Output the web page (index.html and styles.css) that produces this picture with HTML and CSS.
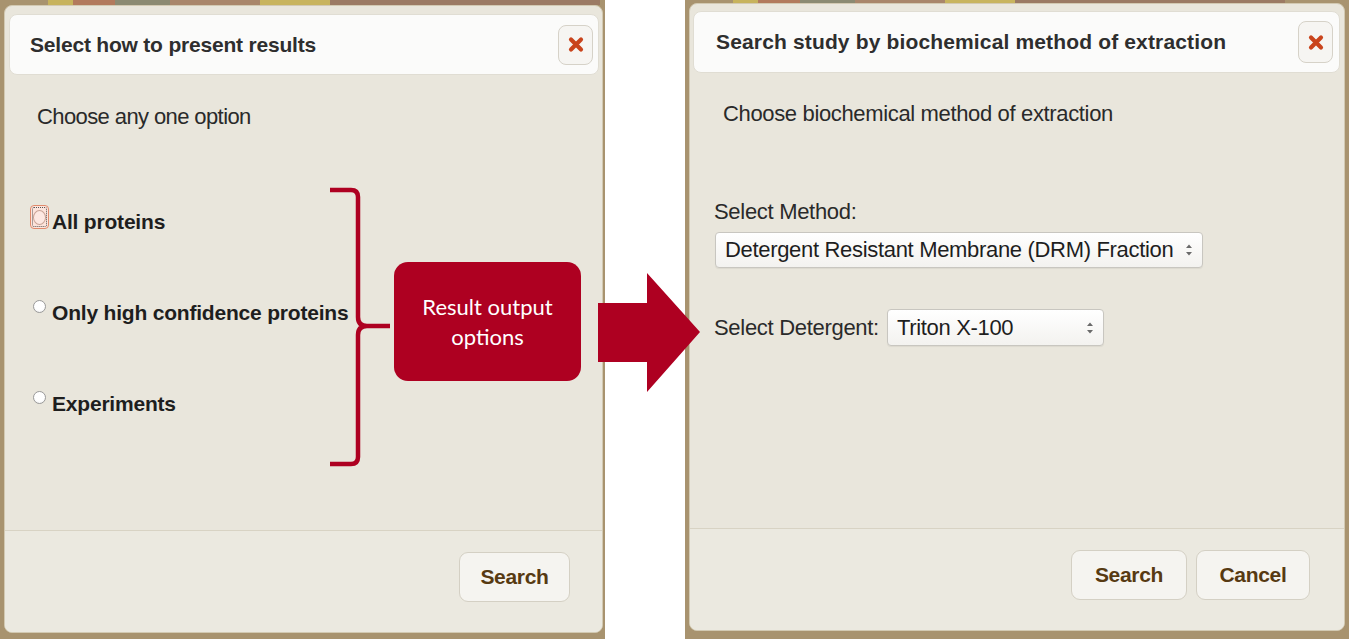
FILE: index.html
```html
<!DOCTYPE html>
<html>
<head>
<meta charset="utf-8">
<link rel="stylesheet" href="styles.css">
</head>
<body>
<div class="page">
  <div class="shot shot-left">
    <div class="dialog dialog-left">
      <div class="titlebar">
        <span class="title">Select how to present results</span>
        <button class="close" aria-label="close">
          <svg width="16" height="17" viewBox="0 0 16 17"><path d="M3 3.5 L13 13.5 M13 3.5 L3 13.5" stroke="#c9441c" stroke-width="4.2" stroke-linecap="round"/></svg>
        </button>
      </div>
      <div class="content content-left">
        <p class="lead">Choose any one option</p>
        <label class="option"><span class="radio radio-focus"><span class="radio-dot"></span></span><span class="opt-text">All proteins</span></label>
        <label class="option"><span class="radio"></span><span class="opt-text">Only high confidence proteins</span></label>
        <label class="option"><span class="radio"></span><span class="opt-text">Experiments</span></label>
      </div>
      <div class="buttonpane">
        <button class="btn btn-search-left">Search</button>
      </div>
    </div>
  </div>

  <div class="shot shot-right">
    <div class="dialog dialog-right">
      <div class="titlebar titlebar-right">
        <span class="title title-right">Search study by biochemical method of extraction</span>
        <button class="close close-right" aria-label="close">
          <svg width="16" height="17" viewBox="0 0 16 17"><path d="M3 3.5 L13 13.5 M13 3.5 L3 13.5" stroke="#c9441c" stroke-width="4.2" stroke-linecap="round"/></svg>
        </button>
      </div>
      <div class="content content-right">
        <p class="lead lead-right">Choose biochemical method of extraction</p>
        <div class="field-label">Select Method:</div>
        <div class="select select-method">
          <span class="select-text">Detergent Resistant Membrane (DRM) Fraction</span>
          <svg class="spin" width="8" height="14" viewBox="0 0 8 14"><path d="M1 5 L4 1.5 L7 5 Z M1 9 L4 12.5 L7 9 Z" fill="#6a6a6a"/></svg>
        </div>
        <div class="det-row">
          <span class="field-label inline">Select Detergent:</span>
          <div class="select select-det">
            <span class="select-text">Triton X-100</span>
            <svg class="spin" width="8" height="14" viewBox="0 0 8 14"><path d="M1 5 L4 1.5 L7 5 Z M1 9 L4 12.5 L7 9 Z" fill="#6a6a6a"/></svg>
          </div>
        </div>
      </div>
      <div class="buttonpane buttonpane-right">
        <button class="btn btn-search-right">Search</button>
        <button class="btn btn-cancel">Cancel</button>
      </div>
    </div>
  </div>

  <svg class="annot" width="1349" height="639" viewBox="0 0 1349 639">
    <path d="M330 190 L351 190 Q358 190 358 197 L358 317 Q358 326 367 326 L390 326 M367 326 Q358 326 358 335 L358 457 Q358 464 351 464 L330 464" fill="none" stroke="#ae0021" stroke-width="4.5"/>
    <polygon points="598,303 647,303 647,273 700,332 647,392 647,362 598,362" fill="#ae0021"/>
  </svg>
  <div class="callout">Result output<br>options</div>
</div>
</body>
</html>
```

FILE: styles.css
```css
* { box-sizing: border-box; }
html, body { margin: 0; padding: 0; background: #ffffff; }
body {
  font-family: "Liberation Sans", Arial, sans-serif;
  color: #2a2a2a;
}
.page {
  position: relative;
  width: 1349px;
  height: 639px;
  display: flex;
  overflow: hidden;
}
.shot {
  height: 639px;
  background:
    linear-gradient(90deg, #a8936f 0 48px, #c7b35d 48px 73px, #b27a5d 73px 115px, #8b8a72 115px 170px, #a9866b 170px 260px, #c8b45e 260px 330px, #9b7a64 330px 600px, #a8936f 600px) top / 100% 5px no-repeat,
    #a8936f;
}
.shot-left {
  width: 605px;
  padding: 5px 2px 6px 4px;
}
.shot-right {
  width: 664px;
  margin-left: 80px;
  padding: 3px 4px 8px 4px;
}
.dialog {
  height: 100%;
  display: flex;
  flex-direction: column;
  background: #e9e6dc;
  border: 1px solid #d2c9b2;
  border-radius: 8px;
  overflow: hidden;
}
.titlebar {
  margin: 8px 3px 0 4px;
  height: 61px;
  flex: none;
  display: flex;
  align-items: center;
  justify-content: space-between;
  background: #fbfbfa;
  border: 1px solid #e0ddd3;
  border-radius: 8px;
  padding-left: 20px;
  padding-right: 5px;
}
.titlebar-right {
  margin: 7px 4px 0 3px;
  height: 62px;
  padding-left: 22px;
  padding-right: 6px;
}
.title {
  font-weight: bold;
  font-size: 21px;
  letter-spacing: -0.2px;
  color: #2e2e2e;
}
.title-right {
  letter-spacing: 0.15px;
}
.close {
  width: 35px;
  height: 40px;
  border: 1px solid #d6d2c8;
  border-radius: 8px;
  background: #f6f5f2;
  display: flex;
  align-items: center;
  justify-content: center;
  padding: 0;
}
.close-right { height: 42px; }
.content {
  flex: 1;
  display: flex;
  flex-direction: column;
}
.content-left {
  padding: 29px 0 0 27px;
}
.lead {
  margin: 0;
  font-size: 22px;
  letter-spacing: -0.6px;
  line-height: 26px;
  padding-left: 5px;
}
.option {
  display: flex;
  align-items: flex-start;
  height: 26px;
  margin-top: 65px;
  padding-left: 1px;
}
.content-left .option:first-of-type { margin-top: 79px; }
.radio {
  width: 13px;
  height: 13px;
  border-radius: 50%;
  border: 1px solid #9a9a9a;
  background: radial-gradient(circle at 50% 35%, #ffffff 0 55%, #ececec 100%);
  margin-right: 6px;
  flex: none;
}
.radio-focus {
  width: 19px;
  height: 24px;
  border-radius: 4px;
  border: 1px solid #e08a6c;
  background: #fde4dc;
  margin-left: -3px;
  margin-top: -4px;
  margin-right: 3px;
  display: flex;
  align-items: center;
  justify-content: center;
  outline: 1px dotted #555;
  outline-offset: -3px;
}
.radio-dot {
  width: 13px;
  height: 15px;
  border-radius: 50%;
  border: 1px solid #c9a396;
  background: #fde8e2;
}
.opt-text {
  font-weight: bold;
  font-size: 21px;
  letter-spacing: -0.2px;
  line-height: 26px;
  color: #1e1e1e;
}
.buttonpane {
  flex: none;
  height: 102px;
  border-top: 1px solid #d8d3c4;
  background: #ebe9e0;
  display: flex;
  justify-content: flex-end;
  align-items: flex-start;
  padding-top: 21px;
  padding-right: 32px;
  gap: 9px;
}
.buttonpane-right {
  height: 102px;
  padding-right: 34px;
}
.btn {
  height: 50px;
  border: 1px solid #d4d0c4;
  border-radius: 9px;
  background: #f5f4f0;
  font-family: "Liberation Sans", Arial, sans-serif;
  font-weight: bold;
  font-size: 21px;
  letter-spacing: -0.3px;
  color: #573a12;
  padding: 0;
}
.btn-search-left { width: 111px; }
.btn-search-right { width: 116px; }
.btn-cancel { width: 114px; }

.content-right {
  padding: 28px 0 0 24px;
}
.lead-right {
  padding-left: 9px;
  letter-spacing: -0.35px;
}
.field-label {
  font-size: 22px;
  letter-spacing: -0.3px;
  line-height: 26px;
  margin-top: 72px;
}
.field-label.inline {
  margin-top: 0;
  margin-right: 8px;
}
.select {
  display: flex;
  align-items: center;
  justify-content: space-between;
  border: 1px solid #c8c6c0;
  border-radius: 4px;
  background: linear-gradient(#ffffff, #f3f2ef);
  box-shadow: 0 1px 1px rgba(0,0,0,0.06);
  padding: 0 9px 0 9px;
}
.select-text {
  font-size: 22px;
  letter-spacing: -0.32px;
  color: #1e1e1e;
}
.select-method {
  width: 488px;
  height: 36px;
  margin-top: 7px;
  margin-left: 1px;
}
.det-row {
  display: flex;
  align-items: center;
  margin-top: 41px;
}
.select-det {
  width: 217px;
  height: 37px;
}
.annot {
  position: absolute;
  left: 0;
  top: 0;
  pointer-events: none;
}
.callout {
  position: absolute;
  left: 394px;
  top: 262px;
  width: 187px;
  height: 119px;
  border-radius: 14px;
  background: #ae0021;
  color: #ffffff;
  font-family: Lato, "Open Sans", sans-serif;
  font-size: 22px;
  line-height: 30px;
  text-align: center;
  display: flex;
  align-items: center;
  justify-content: center;
}
```
